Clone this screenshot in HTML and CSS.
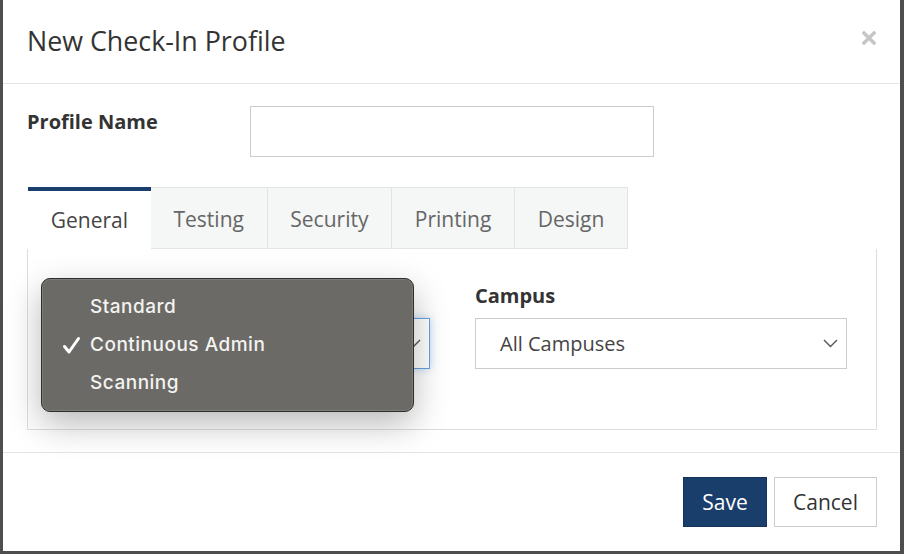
FILE: index.html
```html
<!DOCTYPE html>
<html lang="en">
<head>
    <meta charset="UTF-8">
    <meta name="viewport" content="width=device-width, initial-scale=1.0">
    <title>New Check-In Profile</title>
    <link rel="stylesheet" href="styles.css">
</head>
<body>
    <div class="modal">
        <header class="modal-header">
            <h4 class="modal-title">New Check-In Profile</h4>
            <button class="close" aria-label="Close">
                <svg width="14" height="14" viewBox="0 0 14 14">
                    <path d="M2 2 L12 12 M12 2 L2 12" stroke="currentColor" stroke-width="3.4" stroke-linecap="square"/>
                </svg>
            </button>
        </header>

        <div class="modal-body">
            <div class="form-row">
                <label class="row-label" for="profileName">Profile Name</label>
                <input type="text" id="profileName" class="text-input">
            </div>

            <ul class="tabs">
                <li class="tab active">General</li>
                <li class="tab">Testing</li>
                <li class="tab">Security</li>
                <li class="tab">Printing</li>
                <li class="tab">Design</li>
            </ul>

            <div class="tab-panel">
                <div class="field">
                    <div class="field-label"></div>
                    <div class="select focused">
                        <span></span>
                        <svg class="chevron" width="15" height="9" viewBox="0 0 15 9">
                            <path d="M1 1 L7.5 7.5 L14 1" fill="none" stroke="currentColor" stroke-width="1.4"/>
                        </svg>
                    </div>

                    <!-- open option list of the type select -->
                    <ul class="menu">
                        <li class="menu-item">Standard</li>
                        <li class="menu-item checked">
                            <svg class="check" width="19" height="19" viewBox="0 0 19 19">
                                <path d="M2.5 10.5 L7 16 L16.5 2.5" fill="none" stroke="currentColor" stroke-width="3" stroke-linecap="round" stroke-linejoin="round"/>
                            </svg>
                            Continuous Admin
                        </li>
                        <li class="menu-item">Scanning</li>
                    </ul>
                </div>

                <div class="field">
                    <label class="field-label">Campus</label>
                    <div class="select">
                        <span>All Campuses</span>
                        <svg class="chevron" width="15" height="9" viewBox="0 0 15 9">
                            <path d="M1 1 L7.5 7.5 L14 1" fill="none" stroke="currentColor" stroke-width="1.4"/>
                        </svg>
                    </div>
                </div>
            </div>
        </div>

        <footer class="modal-footer">
            <button class="btn btn-primary">Save</button>
            <button class="btn btn-default">Cancel</button>
        </footer>
    </div>
</body>
</html>
```

FILE: styles.css
```css
:root {
    --navy: #1a3e6c;
    --text: #333333;
    --muted-text: #666666;
    --border: #e5e5e5;
    --input-border: #cccccc;
    --tab-bg: #f5f6f6;
}

* {
    margin: 0;
    padding: 0;
    box-sizing: border-box;
}

body {
    font-family: "Open Sans", "Liberation Sans", sans-serif;
    background-color: #4e4e4e;
    color: var(--text);
    height: 100vh;
    overflow: hidden;
}

.modal {
    margin-left: 3px;
    width: 897px;
    height: 551px;
    background-color: #ffffff;
    display: flex;
    flex-direction: column;
}

.modal-header {
    height: 84px;
    padding: 0 24px;
    border-bottom: 1px solid var(--border);
    display: flex;
    justify-content: space-between;
    align-items: center;
}

.modal-title {
    font-size: 26.8px;
    font-weight: 400;
    color: var(--text);
    margin-top: -3px;
}

.close {
    background: transparent;
    border: none;
    color: #c6c6c6;
    cursor: pointer;
    display: flex;
    margin-top: -8px;
}

.modal-body {
    flex: 1;
    padding: 22px 23px 0 24px;
}

.form-row {
    display: flex;
    align-items: flex-start;
}

.row-label {
    width: 223px;
    font-size: 20px;
    font-weight: 700;
    line-height: 24px;
    padding-top: 4px;
}

.text-input {
    width: 404px;
    height: 51px;
    border: 1px solid var(--input-border);
    outline: none;
    font-family: inherit;
    font-size: 20px;
    padding: 0 16px;
}

.tabs {
    list-style: none;
    display: flex;
    margin-top: 30px;
    padding-left: 1px;
}

.tab {
    height: 62px;
    padding: 2px 22.6px 0 22.8px;
    font-size: 21px;
    color: var(--muted-text);
    background-color: var(--tab-bg);
    border: 1px solid #e3e4e4;
    border-left: none;
    display: flex;
    align-items: center;
}

.tab.active {
    background-color: #ffffff;
    color: #444444;
    border: none;
    border-top: 4px solid var(--navy);
    padding: 0 22.6px 0 22.8px;
}

.tab-panel {
    border: 1px solid #dedede;
    border-top: none;
    height: 181px;
    padding: 35px 30px 0 23px;
    display: grid;
    grid-template-columns: 379px 372px;
    gap: 45px;
}

.field {
    position: relative;
}

.field-label {
    display: block;
    height: 24px;
    font-size: 20px;
    font-weight: 700;
    line-height: 24px;
    margin-bottom: 10px;
}

.select {
    height: 51px;
    border: 1px solid var(--input-border);
    display: flex;
    justify-content: space-between;
    align-items: center;
    padding: 0 8px 0 24px;
    font-size: 20px;
    color: #444444;
}

.select.focused {
    border-color: #66a3e0;
    box-shadow: 0 0 8px rgba(102, 163, 224, 0.45);
}

.chevron {
    color: #555555;
}

.menu {
    position: absolute;
    left: -10px;
    top: -6px;
    width: 373px;
    height: 134px;
    list-style: none;
    background-color: #6b6a66;
    border: 1px solid #2e2e2c;
    border-radius: 9px;
    box-shadow: inset 0 0 0 1px rgba(255, 255, 255, 0.12), 0 12px 34px rgba(0, 0, 0, 0.28);
    padding: 9px 0;
    font-family: Inter, "Noto Sans", sans-serif;
    font-size: 19px;
    font-weight: 500;
    letter-spacing: 0.5px;
    color: #f3f3f1;
}

.menu-item {
    position: relative;
    height: 38px;
    line-height: 38px;
    padding-left: 48px;
}

.check {
    position: absolute;
    left: 20px;
    top: 10px;
    color: #ffffff;
}

.modal-footer {
    height: 99px;
    border-top: 1px solid var(--border);
    display: flex;
    justify-content: flex-end;
    align-items: center;
    gap: 7px;
    padding: 0 23px 0 0;
}

.btn {
    height: 50px;
    font-family: inherit;
    font-size: 21px;
    cursor: pointer;
    border: 1px solid var(--input-border);
}

.btn-primary {
    width: 84px;
    background-color: var(--navy);
    border-color: #14325a;
    color: #ffffff;
}

.btn-default {
    width: 103px;
    background-color: #ffffff;
    color: var(--text);
}
```
